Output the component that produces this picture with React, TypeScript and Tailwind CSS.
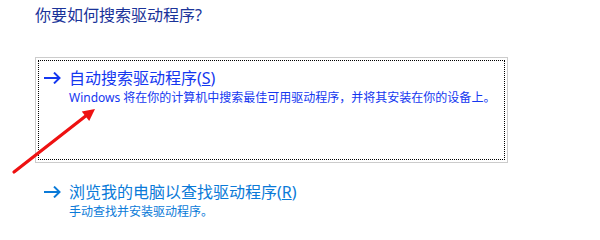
import type { ReactNode } from "react";

const font = {
  fontFamily: '"Noto Sans", "Noto Sans CJK SC", sans-serif',
};

function LinkArrow({ className }: { className: string }) {
  return (
    <svg width="18" height="12" viewBox="0 0 18 12" className={className} fill="none">
      <path d="M1 6H16.5M11 0.6L16.5 6L11 11.4" stroke="currentColor" strokeWidth="2" />
    </svg>
  );
}

function CommandLink({
  title,
  note,
  focused,
  titleColor,
  noteColor,
}: {
  title: ReactNode;
  note: string;
  focused?: boolean;
  titleColor: string;
  noteColor: string;
}) {
  return (
    <div
      className={
        focused
          ? "w-[473px] border border-[#cccccc] p-[2px]"
          : "w-[473px] border border-transparent p-[2px]"
      }
    >
      <div
        className={
          focused
            ? "h-[100px] border border-dotted border-black pt-[7px] pl-[3px]"
            : "border border-transparent pt-[7px] pl-[3px]"
        }
      >
        <div className={`flex items-center ${titleColor}`}>
          <LinkArrow className="ml-[1px] mr-[8px] shrink-0" />
          <span className="text-[16px] leading-[20px]">{title}</span>
        </div>
        <p className={`mt-[2px] pl-[27px] text-[12px] leading-[16px] ${noteColor}`}>{note}</p>
      </div>
    </div>
  );
}

export default function App() {
  return (
    <div className="relative h-[231px] w-[600px] overflow-hidden bg-white" style={font}>
      <h1 className="pl-[35px] pt-[5px] text-[16px] font-normal leading-[20px] text-[#1a3399]">
        你要如何搜索驱动程序?
      </h1>

      <div className="mt-[32px] ml-[35px] flex flex-col gap-[8px]">
        <CommandLink
          focused
          titleColor="text-[#1437f0]"
          noteColor="text-[#1437f0]"
          title={
            <>
              自动搜索驱动程序(<span className="underline">S</span>)
            </>
          }
          note="Windows 将在你的计算机中搜索最佳可用驱动程序，并将其安装在你的设备上。"
        />
        <CommandLink
          titleColor="text-[#0a7ad8]"
          noteColor="text-[#0a7ad8]"
          title={
            <>
              浏览我的电脑以查找驱动程序(<span className="underline">R</span>)
            </>
          }
          note="手动查找并安装驱动程序。"
        />
      </div>

      {/* red annotation arrow */}
      <svg
        className="pointer-events-none absolute left-0 top-0"
        width="600"
        height="231"
        viewBox="0 0 600 231"
      >
        <line x1="14" y1="172" x2="87" y2="115" stroke="#ee1111" strokeWidth="3.2" strokeLinecap="round" />
        <polygon points="95,109 89.2,121 81.8,111.6" fill="#ee1111" />
      </svg>
    </div>
  );
}
